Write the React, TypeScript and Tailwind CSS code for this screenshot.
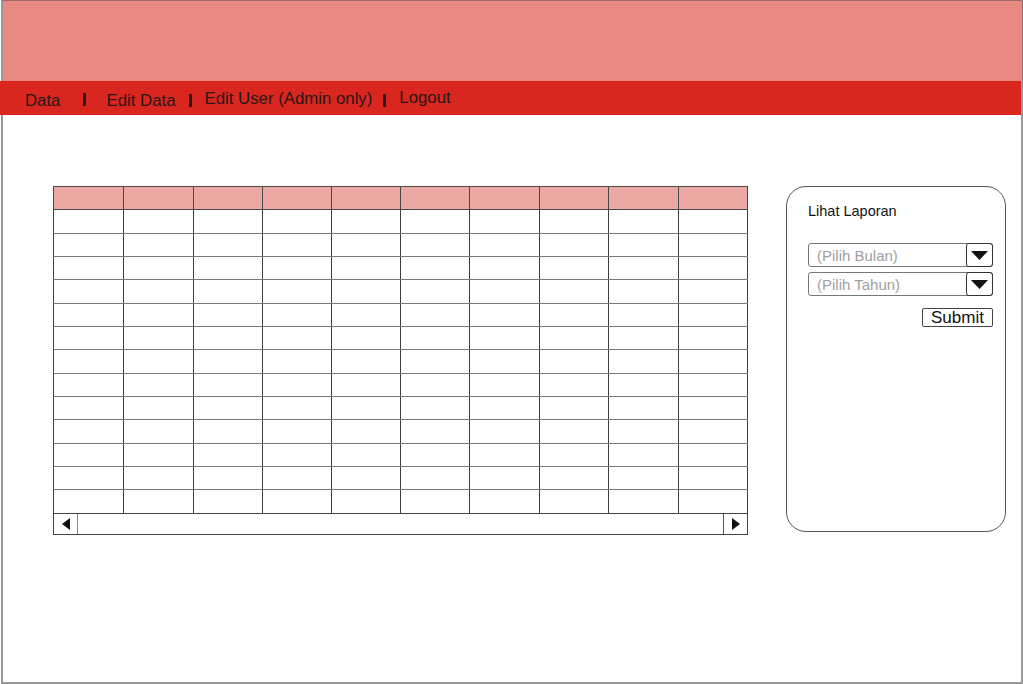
import React from "react";

const colW = [70, 70, 69, 69, 70, 69, 70, 69, 70, 69];
const rowH = [24, 23, 23, 24, 23, 23, 24, 23, 23, 24, 23, 23, 24];

function Sep() {
  return <span className="inline-block w-[3px] h-[13px] bg-[#2b1a1a] mt-[4px]" />;
}

function Select({ label }: { label: string }) {
  return (
    <div className="flex h-[24px] w-[185px] border border-[#777] rounded-[3px]">
      <div className="flex-1 flex items-center pl-[8px] text-[15px] text-[#a0a0a0] leading-none">{label}</div>
      <div className="w-[27px] flex items-center justify-center border-[1.5px] border-[#333] rounded-[3px] -my-px -mr-px">
        <svg width="17" height="9" viewBox="0 0 17 9"><polygon points="0,0 17,0 8.5,9" fill="#111" /></svg>
      </div>
    </div>
  );
}

export default function App() {
  return (
    <div className="w-[1023px] h-[684px] bg-white" style={{ fontFamily: '"Liberation Sans", Arial, sans-serif' }}>
      <div className="ml-px w-[1022px] h-[684px] border-x-2 border-b-2 border-[#999] border-t border-t-[#a06a68] flex flex-col">
        <div className="h-[80px] bg-[#e88a82] border-r border-[#a06a68] -mr-[2px]" />
        <div className="h-[34px] bg-[#d9261f] -ml-[3px] w-[1021px] flex items-start pt-[8px] text-[16.8px] text-[#2a1616] leading-[20px]">
          <span className="ml-[25px] mt-[2px]">Data</span>
          <span className="ml-[23px]"><Sep /></span>
          <span className="ml-[20px] mt-[2px]">Edit Data</span>
          <span className="ml-[14px] mt-[1px]"><Sep /></span>
          <span className="ml-[12px]">Edit User (Admin only)</span>
          <span className="ml-[11px] mt-[1px]"><Sep /></span>
          <span className="ml-[13px] -mt-[1px]">Logout</span>
        </div>
        <div className="flex mt-[71px] pl-[50px]">
          <div className="w-[695px]">
            <table className="border-collapse" style={{ tableLayout: "fixed" }}>
              <thead>
                <tr className="h-[23px] bg-[#eba8a4]">
                  {colW.map((w, i) => (
                    <th key={i} className="border border-[#4a4a4a] p-0" style={{ width: w }} />
                  ))}
                </tr>
              </thead>
              <tbody>
                {rowH.map((h, r) => (
                  <tr key={r} style={{ height: h }}>
                    {colW.map((w, i) => (
                      <td key={i} className="border-x border-x-[#3c3c3c] border-y border-y-[#7a7a7a] p-0" style={{ width: w }} />
                    ))}
                  </tr>
                ))}
              </tbody>
            </table>
            <div className="flex h-[22px] w-[695px] border border-[#444] -mt-px">
              <div className="w-[24px] border-r border-[#888] flex items-center justify-center">
                <svg width="8" height="12" viewBox="0 0 8 12"><polygon points="8,0 8,12 0,6" fill="#111" /></svg>
              </div>
              <div className="flex-1" />
              <div className="w-[24px] border-l border-[#555] flex items-center justify-center">
                <svg width="8" height="12" viewBox="0 0 8 12"><polygon points="0,0 0,12 8,6" fill="#111" /></svg>
              </div>
            </div>
          </div>
          <div className="ml-[38px] w-[220px] h-[346px] border border-[#555] rounded-[20px] pl-[21px] pr-[12px] flex flex-col">
            <div className="mt-[15px] text-[14.5px] leading-[18px] text-[#111]">Lihat Laporan</div>
            <div className="mt-[23px] flex flex-col gap-[5px]">
              <Select label="(Pilih Bulan)" />
              <Select label="(Pilih Tahun)" />
            </div>
            <div className="mt-[12px] flex justify-end w-[185px]">
              <div className="w-[71px] h-[19px] border border-[#444] rounded-[2px] flex items-center justify-center text-[17px] leading-none text-[#111]">
                Submit
              </div>
            </div>
          </div>
        </div>
      </div>
    </div>
  );
}
